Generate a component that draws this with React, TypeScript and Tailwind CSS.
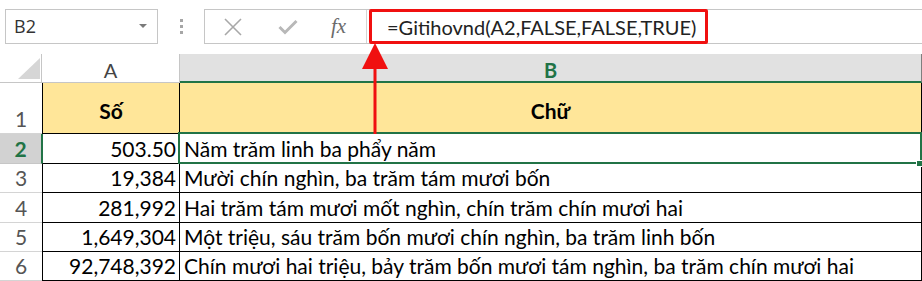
import React from 'react';

const rows = [
  { n: '2', num: '503.50', text: 'Năm trăm linh ba phẩy năm', h: 'h-[30px]' },
  { n: '3', num: '19,384', text: 'Mười chín nghìn, ba trăm tám mươi bốn', h: 'h-[29px]' },
  { n: '4', num: '281,992', text: 'Hai trăm tám mươi mốt nghìn, chín trăm chín mươi hai', h: 'h-[30px]' },
  { n: '5', num: '1,649,304', text: 'Một triệu, sáu trăm bốn mươi chín nghìn, ba trăm linh bốn', h: 'h-[29px]' },
  { n: '6', num: '92,748,392', text: 'Chín mươi hai triệu, bảy trăm bốn mươi tám nghìn, ba trăm chín mươi hai', h: 'h-[29px]' }
];

const App: React.FC = () => {
  return (
    <div className="relative h-[281px] w-[922px] overflow-hidden bg-white font-['Lato','Noto_Sans',sans-serif] text-black">
      {/* formula bar */}
      <div className="flex h-[54px] items-start pt-[9px]">
        <div className="ml-[5px] flex h-[35px] w-[153px] items-center justify-between border border-[#c6c6c6] pl-[8px] pr-[10px]">
          <span className="font-['Open_Sans',sans-serif] text-[18px] text-[#333]">B2</span>
          <span className="mb-[2px] h-0 w-0 border-x-[4px] border-t-[4px] border-x-transparent border-t-[#7a7a7a]"></span>
        </div>
        <div className="flex h-[35px] w-[46px] flex-col items-center justify-center gap-[3px]">
          <span className="h-[3px] w-[3px] bg-[#a6a6a6]"></span>
          <span className="h-[3px] w-[3px] bg-[#a6a6a6]"></span>
          <span className="h-[3px] w-[3px] bg-[#a6a6a6]"></span>
        </div>
        <div className="flex h-[35px] flex-1 border border-r-0 border-[#c6c6c6]">
          <div className="flex w-[162px] items-center border-r border-[#d4d4d4]">
            <svg className="ml-[19px]" width="18" height="18" viewBox="0 0 18 18">
              <path d="M1 1 L17 17 M17 1 L1 17" stroke="#a8a8a8" strokeWidth="1.6" fill="none" />
            </svg>
            <svg className="ml-[36px]" width="20" height="16" viewBox="0 0 20 16">
              <path d="M1.5 8 L7 13.5 L18.5 2" stroke="#b8b8b8" strokeWidth="3" fill="none" />
            </svg>
            <span className="ml-[33px] font-['Liberation_Serif',serif] text-[21px] italic text-[#6b6b6b]">fx</span>
          </div>
          <div className="flex items-center pl-[20px] text-[20px] text-[#222]">=Gitihovnd(A2,FALSE,FALSE,TRUE)</div>
        </div>
      </div>

      {/* column headers */}
      <div className="flex h-[29px] text-[20px] leading-none">
        <div className="relative w-[42px] border-b border-r border-[#c6c6c6]">
          <svg className="absolute left-[18px] top-[4px]" width="22" height="21" viewBox="0 0 22 21">
            <path d="M22 0 L22 21 L0 21 Z" fill="#d6d6d6" />
          </svg>
        </div>
        <div className="flex w-[138px] items-center justify-center border-b border-r border-[#c6c6c6] pt-[4px] text-[#444]">A</div>
        <div className="flex w-[742px] items-center justify-center border-b-2 border-r border-b-[#217346] border-r-[#7f7f7f] bg-[#e1e1e1] pt-[4px] font-bold text-[#217346]">B</div>
      </div>

      {/* row 1 */}
      <div className="flex h-[51px] text-[21px] leading-none">
        <div className="flex w-[42px] items-end justify-center border-b border-[#d4d4d4] pb-[4px] text-[#555]">1</div>
        <div className="flex w-[138px] items-center justify-center border-x border-b border-black bg-[#ffe699] pt-[4px] font-bold">Số</div>
        <div className="flex w-[742px] items-center justify-center border-b border-r border-black bg-[#ffe699] pt-[4px] font-bold">Chữ</div>
      </div>

      {/* data rows */}
      {rows.map((r) => {
        const sel = r.n === '2';
        return (
          <div key={r.n} className={`flex ${r.h} text-[21px] leading-none`}>
            <div
              className={
                sel
                  ? 'flex w-[42px] items-end justify-center border-b border-r border-b-[#c6c6c6] border-r-[#217346] bg-[#d2d2d2] pb-[4px] font-bold text-[#217346]'
                  : 'flex w-[42px] items-end justify-center border-b border-[#d4d4d4] pb-[4px] text-[#555]'
              }
            >
              {r.n}
            </div>
            <div
              className={
                sel
                  ? 'flex w-[138px] items-end justify-end border-b border-l border-r border-black border-l-[#217346] pb-[4px] pr-[3px]'
                  : 'flex w-[138px] items-end justify-end border-x border-b border-black pb-[4px] pr-[3px]'
              }
            >
              {r.num}
            </div>
            <div className="flex w-[742px] items-end whitespace-nowrap border-b border-r border-black pb-[4px] pl-[4px]">{r.text}</div>
          </div>
        );
      })}

      {/* selected cell B2 */}
      <div className="absolute left-[178px] top-[132px] h-[32px] w-[744px] border-2 border-[#217346]"></div>
      <div className="absolute left-[916px] top-[160px] h-[7px] w-[7px] border border-white bg-[#217346]"></div>

      {/* red highlight on formula */}
      <div className="absolute left-[369px] top-[9px] h-[35px] w-[339px] rounded-[2px] border-[3px] border-[#f01010]"></div>
      <svg className="absolute left-[360px] top-[43px]" width="30" height="91" viewBox="0 0 30 91">
        <path d="M15 0 L28 26 L2 26 Z" fill="#f01010" />
        <rect x="13.5" y="24" width="3" height="67" fill="#f01010" />
      </svg>
    </div>
  );
};

export default App;
